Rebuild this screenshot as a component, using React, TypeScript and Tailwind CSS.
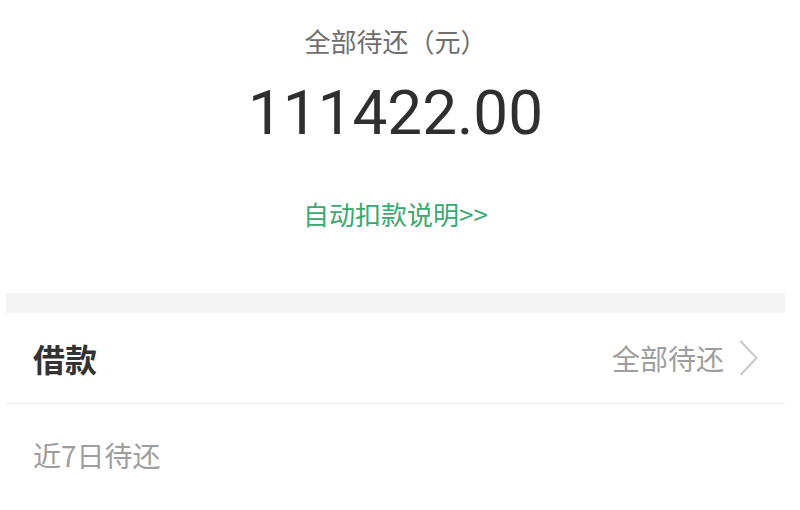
export default function App() {
  const cjk = { fontFamily: '"Noto Sans CJK SC", "Noto Sans", sans-serif' };
  return (
    <div className="w-[800px] h-[510px] bg-white overflow-hidden pl-[6px] pr-[15px]" style={cjk}>
      {/* 顶部汇总 */}
      <div className="flex flex-col items-center">
        <div className="mt-[28px] text-[26px] leading-[26px] text-[#6e6e6e]">全部待还（元）</div>
        <div className="mt-[28px] text-[62px] leading-[62px] text-[#2f2f2f] font-['Roboto',sans-serif]">
          111422.00
        </div>
        <div className="mt-[57px] text-[26px] leading-[26px] text-[#3aa86f]">自动扣款说明&gt;&gt;</div>
      </div>

      <div className="mt-[66px] h-[20px] bg-[#f4f4f4]" />

      {/* 借款 */}
      <div className="h-[91px] flex items-center justify-between border-b border-[#ececec] pl-[27px] pr-[27px]">
        <span className="text-[32px] font-bold text-[#333]">借款</span>
        <div className="flex items-center gap-[15px]">
          <span className="text-[28px] text-[#9e9e9e]">全部待还</span>
          <svg width="19" height="38" viewBox="0 0 19 38" fill="none">
            <polyline points="1.5,2 17.5,19 1.5,36" stroke="#c8c8c8" strokeWidth="2" />
          </svg>
        </div>
      </div>

      <div className="pt-[37px] pl-[27px] text-[28px] leading-[28px] text-[#9e9e9e]">近7日待还</div>
    </div>
  );
}
